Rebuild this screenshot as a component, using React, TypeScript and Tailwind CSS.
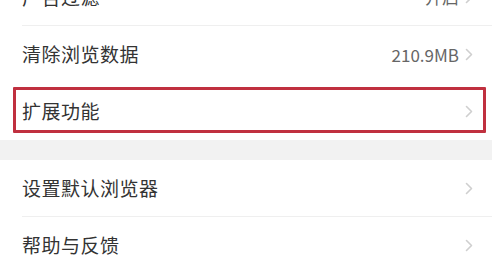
import React from "react";

function Chevron() {
    return (
        <svg width="8" height="13" viewBox="0 0 8 13" fill="none" className="shrink-0">
            <polyline points="1.5,1.5 6.5,6.5 1.5,11.5" stroke="#cfcfcf" strokeWidth="1.6" strokeLinecap="round" strokeLinejoin="round" />
        </svg>
    );
}

function Row({ label, value, divider = true, highlight = false }: { label: string, value?: string, divider?: boolean, highlight?: boolean }) {
    return (
        <div className="relative h-[57px] pl-[22px]">
            <div className={`h-full flex items-center justify-between pr-[19px] ${divider ? "border-b border-[#efefef]" : ""}`}>
                <span className="text-[19px] text-[#333333] tracking-[0.5px]">{label}</span>
                <div className="flex items-center gap-[6px]">
                    {value && <span className="text-[17px] text-[#666666]">{value}</span>}
                    <Chevron />
                </div>
            </div>
            {highlight && (
                <div className="absolute left-[13px] right-[6px] top-[4px] bottom-[7px] border-[3px] border-[#c0303f] rounded-[1px]" />
            )}
        </div>
    );
}

export default function App() {
    return (
        <div className="w-[492px] h-[261px] overflow-hidden bg-white" style={{ fontFamily: '"Noto Sans CJK SC", "Noto Sans", sans-serif' }}>
            <div className="-mt-[31px]">
                <Row label="广告过滤" value="开启" />
                <Row label="清除浏览数据" value="210.9MB" divider={false} />
                <Row label="扩展功能" divider={false} highlight />
                <div className="h-[20px] bg-[#f2f2f2]" />
                <Row label="设置默认浏览器" />
                <Row label="帮助与反馈" divider={false} />
            </div>
        </div>
    );
}
